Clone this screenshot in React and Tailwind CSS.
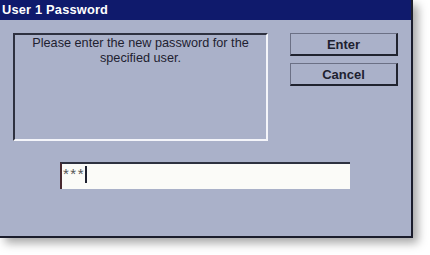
export default function App() {
  return (
    <div className="w-[430px] h-[255px] bg-white font-['Liberation_Sans',Arial,sans-serif]">
      <div className="w-[413px] h-[238px] flex flex-col bg-[#aab1c9] border-r-2 border-b-2 border-[#1b1d2c] shadow-[5px_5px_9px_rgba(0,0,0,0.35)]">
        {/* Title bar */}
        <div className="h-[20px] bg-[#0f1a6c] flex items-center px-[2px]">
          <span className="text-white font-bold text-[12.8px] leading-none tracking-[0.2px]">User 1 Password</span>
        </div>

        <div className="flex gap-[22px] pl-[13px] pt-[13px]">
          {/* Message box */}
          <div className="w-[255px] h-[108px] border-2 border-t-[#2e3140] border-l-[#2e3140] border-b-[#f4f5fa] border-r-[#f4f5fa] pt-[1px] px-1 text-center text-[12.7px] leading-[15px] text-[#1e2130] whitespace-nowrap">
            Please enter the new password for the
            <br />
            specified user.
          </div>

          {/* Buttons */}
          <div className="flex flex-col gap-[7px]">
            <button className="w-[108px] h-[23px] border border-[#6b7085] border-r-2 border-b-2 border-r-[#20232f] border-b-[#20232f] bg-[#aab1c9] text-[13px] font-bold text-[#1e2130] leading-none">
              Enter
            </button>
            <button className="w-[108px] h-[23px] border border-[#6b7085] border-r-2 border-b-2 border-r-[#20232f] border-b-[#20232f] bg-[#aab1c9] text-[13px] font-bold text-[#1e2130] leading-none">
              Cancel
            </button>
          </div>
        </div>

        {/* Password field */}
        <div className="pl-[60px] pt-[21px]">
          <div className="w-[290px] h-[27px] bg-[#fbfbf8] border-t-2 border-l-2 border-t-[#2e3140] border-l-[#4a2a30] flex items-start pt-[2px] pl-[1px]">
            <span className="text-[15px] text-[#555] tracking-[1.5px] leading-none">***</span>
            <span className="w-[2px] h-[17px] bg-[#1e2130]" />
          </div>
        </div>
      </div>
    </div>
  );
}
